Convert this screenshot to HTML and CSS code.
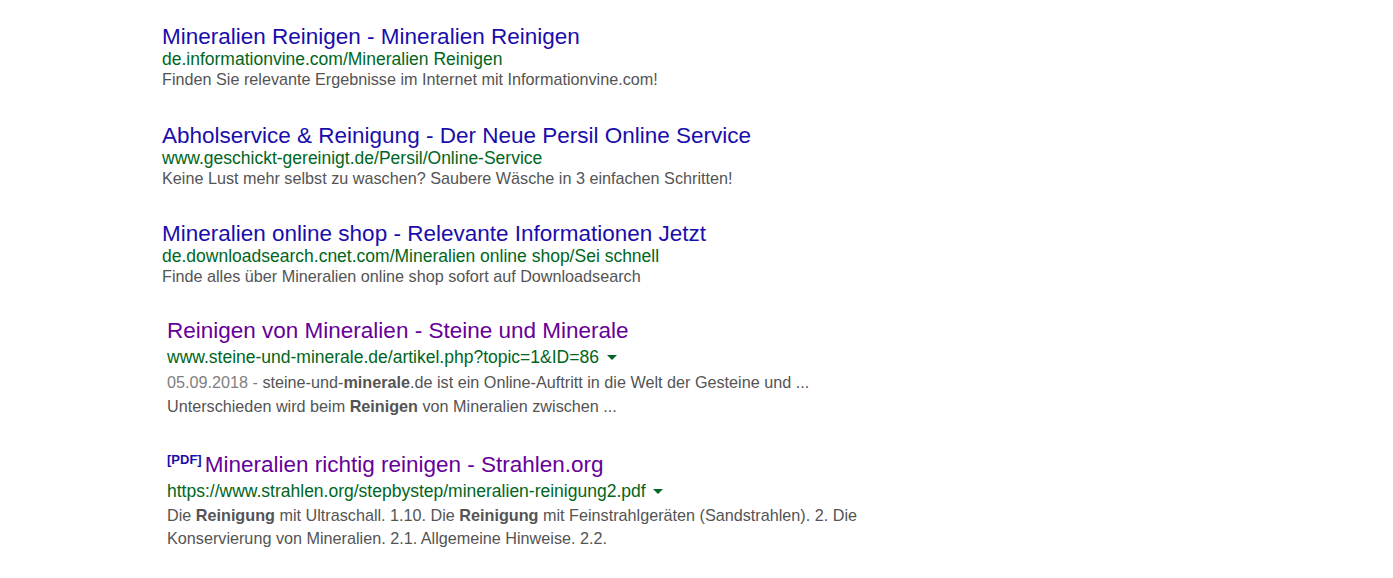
FILE: index.html
```html
<!DOCTYPE html>
<html lang="de">
<head>
<meta charset="utf-8">
<link rel="stylesheet" href="styles.css">
</head>
<body>
<main class="results">
  <div class="ad">
    <a class="title">Mineralien Reinigen - Mineralien Reinigen</a>
    <div class="url">de.informationvine.com/Mineralien Reinigen</div>
    <div class="desc">Finden Sie relevante Ergebnisse im Internet mit Informationvine.com!</div>
  </div>
  <div class="ad">
    <a class="title">Abholservice &amp; Reinigung - Der Neue Persil Online Service</a>
    <div class="url">www.geschickt-gereinigt.de/Persil/Online-Service</div>
    <div class="desc">Keine Lust mehr selbst zu waschen? Saubere Wäsche in 3 einfachen Schritten!</div>
  </div>
  <div class="ad">
    <a class="title">Mineralien online shop - Relevante Informationen Jetzt</a>
    <div class="url">de.downloadsearch.cnet.com/Mineralien online shop/Sei schnell</div>
    <div class="desc">Finde alles über Mineralien online shop sofort auf Downloadsearch</div>
  </div>
  <div class="organic first">
    <a class="otitle">Reinigen von Mineralien - Steine und Minerale</a>
    <div class="ourl">www.steine-und-minerale.de/artikel.php?topic=1&amp;ID=86 <span class="arrow"></span></div>
    <div class="odesc"><span class="date">05.09.2018 - </span>steine-und-<b>minerale</b>.de ist ein Online-Auftritt in die Welt der Gesteine und ...<br>Unterschieden wird beim <b>Reinigen</b> von Mineralien zwischen ...</div>
  </div>
  <div class="organic">
    <a class="otitle"><span class="pdf">[PDF]</span>Mineralien richtig reinigen - Strahlen.org</a>
    <div class="ourl">https://www.strahlen.org/stepbystep/mineralien-reinigung2.pdf <span class="arrow"></span></div>
    <div class="odesc tight">Die <b>Reinigung</b> mit Ultraschall. 1.10. Die <b>Reinigung</b> mit Feinstrahlgeräten (Sandstrahlen). 2. Die<br>Konservierung von Mineralien. 2.1. Allgemeine Hinweise. 2.2.</div>
  </div>
</main>
</body>
</html>
```
FILE: styles.css
```css
html, body {
  margin: 0;
  padding: 0;
  background: #ffffff;
}
body {
  font-family: "Liberation Sans", Arial, sans-serif;
}
.results {
  padding: 24px 0 0 162px;
}
.ad {
  display: flex;
  flex-direction: column;
  height: 98.5px;
}
.title {
  color: #1a0dab;
  font-size: 22.5px;
  line-height: 26px;
  white-space: nowrap;
}
.url {
  color: #006621;
  font-size: 17.5px;
  line-height: 20px;
  margin-top: -1px;
}
.desc {
  color: #545454;
  font-size: 16.2px;
  line-height: 20px;
}
.organic {
  padding-left: 5px;
}
.organic.first {
  margin-top: -3px;
  height: 129px;
}
.otitle {
  display: block;
  color: #660099;
  font-size: 22.5px;
  line-height: 27px;
  white-space: nowrap;
}
.pdf {
  color: #1a0dab;
  font-size: 13px;
  font-weight: bold;
  vertical-align: 8px;
  margin-right: 3px;
}
.ourl {
  color: #006621;
  font-size: 17.5px;
  line-height: 26px;
  white-space: nowrap;
}
.arrow {
  display: inline-block;
  width: 0;
  height: 0;
  border-left: 5px solid transparent;
  border-right: 5px solid transparent;
  border-top: 5px solid #006621;
  vertical-align: 3px;
  margin-left: 3px;
}
.odesc {
  color: #545454;
  font-size: 16.2px;
  line-height: 24px;
  white-space: nowrap;
}
.odesc.tight {
  line-height: 23.5px;
}
.date {
  color: #808080;
}
```
